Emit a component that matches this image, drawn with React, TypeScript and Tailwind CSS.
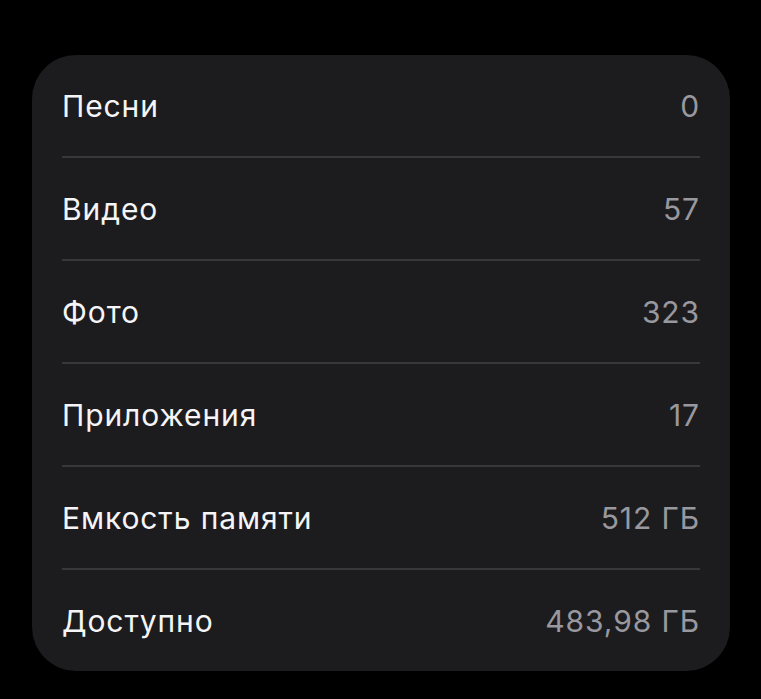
import React from 'react';

interface StatRow {
  label: string;
  value: string;
}

const rows: StatRow[] = [
  { label: 'Песни', value: '0' },
  { label: 'Видео', value: '57' },
  { label: 'Фото', value: '323' },
  { label: 'Приложения', value: '17' },
  { label: 'Емкость памяти', value: '512 ГБ' },
  { label: 'Доступно', value: '483,98 ГБ' },
];

export default function App() {
  return (
    <div className="min-h-[699px] w-full bg-black pt-[55px] pl-[32px] font-['Inter',sans-serif]">
      <div className="w-[698px] rounded-[44px] bg-[#1c1c1e] pl-[30px] pr-[30px]">
        {rows.map((row, i) => (
          <div key={row.label}>
            {i > 0 && <div className="h-[2px] bg-[#38383a]" />}
            <div className="flex h-[101px] items-center justify-between text-[30px] leading-none tracking-[0.9px]">
              <span className="text-[#f5f5f7]">{row.label}</span>
              <span className="text-[#98989e]">{row.value}</span>
            </div>
          </div>
        ))}
      </div>
    </div>
  );
}
